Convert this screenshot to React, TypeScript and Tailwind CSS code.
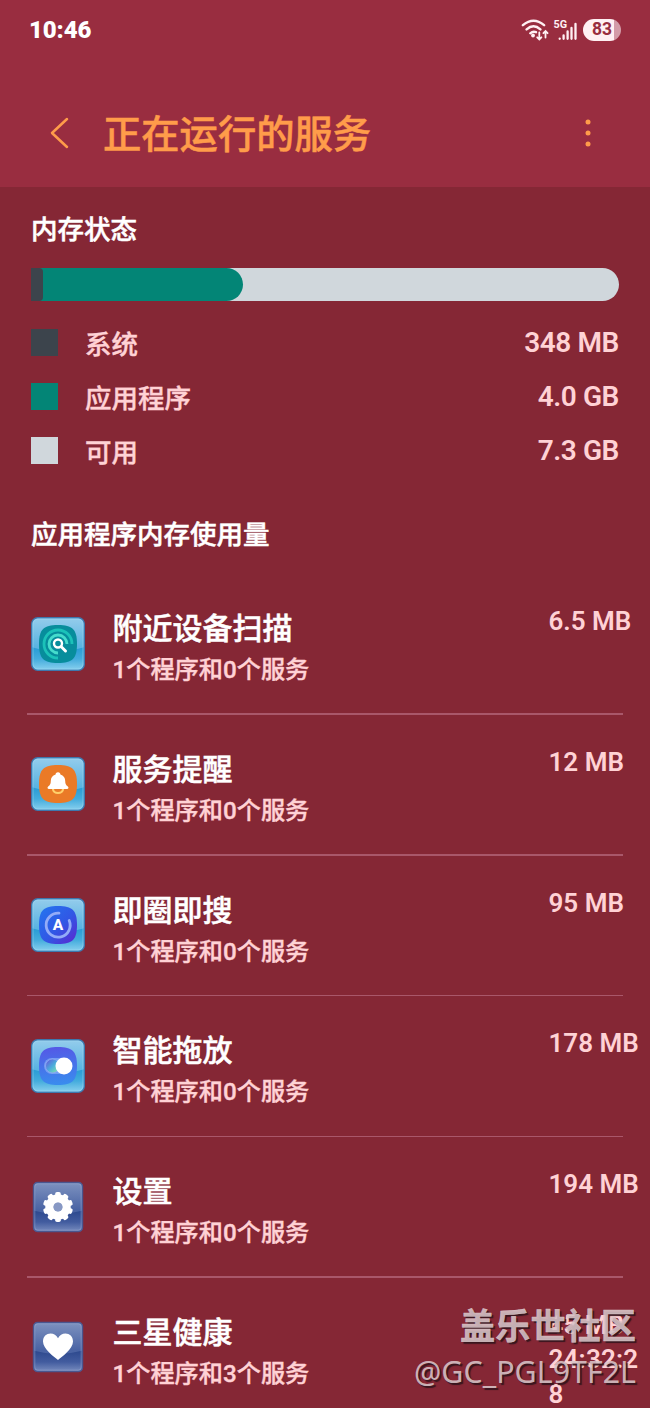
import type { ReactNode } from "react";
import clsx from "clsx";

const memory = [
  { label: "系统", value: "348 MB", color: "bg-[#3c444c]" },
  { label: "应用程序", value: "4.0 GB", color: "bg-[#038576]" },
  { label: "可用", value: "7.3 GB", color: "bg-[#d0d7dc]" },
];

const apps = [
  { name: "附近设备扫描", detail: "1个程序和0个服务", size: "6.5 MB", icon: <ScanIcon /> },
  { name: "服务提醒", detail: "1个程序和0个服务", size: "12 MB", icon: <BellIcon /> },
  { name: "即圈即搜", detail: "1个程序和0个服务", size: "95 MB", icon: <CircleSearchIcon /> },
  { name: "智能拖放", detail: "1个程序和0个服务", size: "178 MB", icon: <ToggleIcon /> },
  { name: "设置", detail: "1个程序和0个服务", size: "194 MB", icon: <GearIcon /> },
  { name: "三星健康", detail: "1个程序和3个服务", size: "45 MB", time: "24:32:28", icon: <HeartIcon /> },
];

// Glossy 54px tile shared by all of the app icons
function Tile({ id, dark, children }: { id: string; dark?: boolean; children: ReactNode }) {
  const inset = dark ? 2.5 : 0.7;
  const side = 54 - inset * 2;
  return (
    <svg viewBox="0 0 54 54" className="h-[54px] w-[54px]">
      <defs>
        <linearGradient id={`${id}-top`} x1="0" y1="0" x2="0" y2="1">
          <stop offset="0" stopColor={dark ? "#8296c2" : "#96cdec"} />
          <stop offset="0.55" stopColor={dark ? "#4a64a4" : "#5ab4e2"} />
          <stop offset="1" stopColor={dark ? "#46609f" : "#59b3e1"} />
        </linearGradient>
        <linearGradient id={`${id}-low`} x1="0" y1="0" x2="0" y2="1">
          <stop offset="0" stopColor={dark ? "#2b478c" : "#279bd5"} />
          <stop offset="0.5" stopColor={dark ? "#425c9f" : "#44acdd"} />
          <stop offset="1" stopColor={dark ? "#8598c6" : "#8ed3f0"} />
        </linearGradient>
        <clipPath id={`${id}-clip`}>
          <rect x={inset} y={inset} width={side} height={side} rx={dark ? 4 : 6} />
        </clipPath>
      </defs>
      <g clipPath={`url(#${id}-clip)`}>
        <rect width="54" height="54" fill={`url(#${id}-top)`} />
        <path d="M0 30Q27 38 54 30V54H0Z" fill={`url(#${id}-low)`} />
      </g>
      <rect
        x={inset}
        y={inset}
        width={side}
        height={side}
        rx={dark ? 4 : 6}
        fill="none"
        stroke={dark ? "#4a568f" : "#3d78ae"}
        strokeWidth="1.4"
      />
      <rect
        x={inset + 1.3}
        y={inset + 1.3}
        width={side - 2.6}
        height={side - 2.6}
        rx={dark ? 3 : 5}
        fill="none"
        stroke={dark ? "#9eb0d5" : "#a5def6"}
        strokeOpacity="0.5"
        strokeWidth="0.9"
      />
      {children}
    </svg>
  );
}

const squircle = "M27 8C41.5 8 46 12.5 46 27S41.5 46 27 46 8 41.5 8 27 12.500 8 27 8Z";

function ScanIcon() {
  return (
    <Tile id="scan">
      <path d={squircle} fill="#078d9c" />
      <g fill="none" strokeWidth="2.8">
        <path d="M27 41A14 14 0 1 1 41 27" stroke="#1bc2b9" />
        <path d="M27 36A9 9 0 1 1 36 27" stroke="#45dccc" />
      </g>
      <circle cx="27" cy="26.500" r="4" fill="#078d9c" stroke="#fff" strokeWidth="2.4" />
      <path d="M30.300 29.800L34.500 34" stroke="#fff" strokeWidth="3" strokeLinecap="round" />
    </Tile>
  );
}

function BellIcon() {
  return (
    <Tile id="bell">
      <path d={squircle} fill="#ea7a27" />
      <path d="M22 32a5 4 0 0 0 10 0" fill="none" stroke="#ffd06b" strokeWidth="2.200" />
      <path
        d="M27 15.200c1.600 0 2.500 1 2.400 2.300 3.200 1 4.800 3.500 4.800 6.500 0 3 .9 4.200 2.400 5.300 1.500 1.200 1 2.700-.6 2.700H18c-1.600 0-2.100-1.500-.6-2.700 1.500-1.100 2.400-2.300 2.400-5.300 0-3 1.600-5.500 4.800-6.500-.1-1.300.8-2.300 2.400-2.300Z"
        fill="#fff"
      />
    </Tile>
  );
}

function CircleSearchIcon() {
  return (
    <Tile id="circle">
      <defs>
        <linearGradient id="circle-bg" x1="0" y1="0" x2="1" y2="1">
          <stop offset="0" stopColor="#2376ef" />
          <stop offset="0.55" stopColor="#3157e5" />
          <stop offset="1" stopColor="#5d25cf" />
        </linearGradient>
      </defs>
      <path d={squircle} fill="url(#circle-bg)" />
      <path
        d="M28 15.200A12 12 0 1 0 38.200 22.500"
        fill="none"
        stroke="#93acf8"
        strokeWidth="2.800"
        strokeLinecap="round"
      />
      <text
        x="27"
        y="32.300"
        textAnchor="middle"
        fill="#fff"
        fontSize="15.500"
        fontWeight="800"
        fontFamily="Roboto, sans-serif"
      >
        A
      </text>
    </Tile>
  );
}

function ToggleIcon() {
  return (
    <Tile id="toggle">
      <defs>
        <linearGradient id="toggle-bg" x1="0.500" y1="0" x2="0.600" y2="1">
          <stop offset="0" stopColor="#5459e6" />
          <stop offset="1" stopColor="#398dee" />
        </linearGradient>
        <linearGradient id="toggle-ball" x1="0" y1="0" x2="1" y2="1">
          <stop offset="0" stopColor="#674cda" />
          <stop offset="0.500" stopColor="#4bacdc" />
          <stop offset="1" stopColor="#8bf0a4" />
        </linearGradient>
      </defs>
      <path d={squircle} fill="url(#toggle-bg)" />
      <rect x="13" y="19" width="28" height="16" rx="8" fill="#7ba6f3" fillOpacity="0.85" />
      <circle cx="21.500" cy="27" r="7" fill="url(#toggle-ball)" stroke="#92a5f5" strokeWidth="0.8" />
      <circle cx="33" cy="27" r="8.500" fill="#fff" />
    </Tile>
  );
}

function GearIcon() {
  const teeth = [0, 36, 72, 108, 144, 180, 216, 252, 288, 324];
  return (
    <Tile id="gear" dark>
      <circle cx="27" cy="27" r="8.500" fill="none" stroke="#fff" strokeWidth="8.500" />
      {teeth.map((angle) => (
        <rect
          key={angle}
          x="24.200"
          y="12"
          width="5.600"
          height="6"
          rx="1.800"
          fill="#fff"
          transform={`rotate(${angle} 27 27)`}
        />
      ))}
      <circle cx="27" cy="27" r="4.600" fill="#8798c4" />
    </Tile>
  );
}

function HeartIcon() {
  return (
    <Tile id="heart" dark>
      <path
        d="M27 40C23 36.700 12 29 12 21.500c0-5.200 3.500-8 7.500-8 3.300 0 6 1.900 7.500 4.700 1.500-2.800 4.200-4.700 7.500-4.700 4 0 7.500 2.800 7.500 8C42 29 31 36.700 27 40Z"
        fill="#fff"
      />
    </Tile>
  );
}

function StatusBar() {
  return (
    <div className="flex h-[60px] items-center justify-between pr-[29px] pl-[29px] text-white">
      <span className="font-['Roboto',sans-serif] text-[24px] leading-[60px] font-black tracking-[-0.1px]">
        10:46
      </span>
      <div className="flex items-center">
        <svg viewBox="0 0 58 26" className="h-[26px] w-[58px]" fill="none" stroke="#fff0f3" strokeLinecap="round">
          <path
            d="M1.900 8.200Q12.500-.8 23.100 8.200M5.600 12.400Q12.500 6.200 19.400 12.400M9.300 16.300Q12 13.800 15 15.200"
            strokeWidth="2.400"
          />
          <circle cx="12" cy="18.500" r="1.900" fill="#fff0f3" stroke="none" />
          <path
            d="M18.300 15.500v6.500M16.200 20.300l2.100 2.100 2.100-2.100M24.500 20.500v-6.500M22.400 16.200l2.100-2.100 2.100 2.100"
            strokeWidth="1.800"
          />
          <text x="32.500" y="11.300" fill="#fff0f3" stroke="none" fontSize="10.800" fontWeight="700" fontFamily="Roboto, sans-serif">
            5G
          </text>
          <path d="M38.700 21.600v.2M42.600 18.500v3.300M46.600 14.500v7.300M50.500 11v10.800M54.500 7v14.800" strokeWidth="2.300" />
        </svg>
        <div className="ml-1 flex h-[22px] w-[38px] items-center justify-center rounded-full bg-linear-to-r from-[#fff0f3] from-82% to-[#d39ba8] to-82% font-['Roboto',sans-serif] text-[17.5px] leading-none font-bold text-[#992d40]">
          83
        </div>
      </div>
    </div>
  );
}

function Header() {
  return (
    <header className="h-[187px] bg-[#992d40]">
      <StatusBar />
      <div className="flex h-[146px] items-center pr-[56px] pl-[49px] text-[#ff9c4a]">
        <svg viewBox="0 0 20 34" className="h-[34px] w-5" fill="none">
          <path d="M18 3L3 17L18 31" stroke="currentColor" strokeWidth="2.500" strokeLinecap="round" strokeLinejoin="round" />
        </svg>
        <h1 className="ml-[34px] flex-1 pt-1 text-[38.3px] leading-[54px] font-medium whitespace-nowrap [-webkit-text-stroke:0.5px]">
          正在运行的服务
        </h1>
        <svg viewBox="0 0 12 30" className="h-[30px] w-3" fill="currentColor">
          <circle cx="6" cy="4" r="2.500" />
          <circle cx="6" cy="15" r="2.500" />
          <circle cx="6" cy="26" r="2.500" />
        </svg>
      </div>
    </header>
  );
}

function MemoryStatus() {
  return (
    <section className="px-[31px] pt-[23px]">
      <h2 className="text-[26.5px] leading-10 font-medium text-white [-webkit-text-stroke:0.5px]">内存状态</h2>
      <div className="mt-[18px] h-[33px] overflow-hidden rounded-l-md rounded-r-full bg-[#d0d7dc]">
        <div className="h-full w-[212px] rounded-r-full bg-[#038576]">
          <div className="h-full w-3 rounded-r-[4px] bg-[#3c444c]" />
        </div>
      </div>
      <ul className="mt-[14px]">
        {memory.map(({ label, value, color }) => (
          <li key={label} className="flex h-[54px] items-center text-[#ffd2d5]">
            <span className={clsx("h-[27px] w-[27px]", color)} />
            <span className="ml-[27px] flex-1 pt-1.5 text-[26.5px] leading-10 font-medium [-webkit-text-stroke:0.4px]">
              {label}
            </span>
            <span className="pt-0.5 font-['Roboto',sans-serif] text-[28px] leading-8 font-semibold tracking-[-0.4px]">
              {value}
            </span>
          </li>
        ))}
      </ul>
    </section>
  );
}

function AppList() {
  return (
    <section className="mt-[38px]">
      <h2 className="pl-[31px] text-[26.5px] leading-10 font-medium text-white [-webkit-text-stroke:0.5px]">
        应用程序内存使用量
      </h2>
      <ul className="mt-[19px]">
        {apps.map(({ name, detail, size, time, icon }) => (
          <li key={name} className="relative flex h-[140.8px] pl-[30.5px]">
            <div className="mt-[42.5px]">{icon}</div>
            <div className="ml-7 w-[436px] pt-[33px]">
              <h3 className="text-[30px] leading-[44px] font-medium text-white [-webkit-text-stroke:0.5px]">{name}</h3>
              <p className="text-[24.2px] leading-[38px] font-medium text-[#ffd2d5] [-webkit-text-stroke:0.4px]">
                {detail}
              </p>
            </div>
            <div className="w-[94px] pt-[30px] font-['Roboto',sans-serif] text-[26px] leading-[34.500px] font-semibold break-all text-[#ffd2d5]">
              <p className="whitespace-nowrap">{size}</p>
              {time && <p className="tracking-[0.2px]">{time}</p>}
            </div>
            <div className="absolute right-[27px] bottom-0 left-[27px] h-[1.5px] bg-[#a9576a]" />
          </li>
        ))}
      </ul>
    </section>
  );
}

function Watermark() {
  return (
    <div className="absolute right-[14px] bottom-[15px] text-right whitespace-nowrap text-[#d9c5c9]/90 [text-shadow:2px_2px_1px_#38161e]">
      <p className="text-[35.2px] leading-[48px] font-bold [-webkit-text-stroke:0.5px]">盖乐世社区</p>
      <p className="font-['Noto_Sans','Open_Sans',sans-serif] text-[30.4px] leading-[42px]">@GC_PGL9TF2L</p>
    </div>
  );
}

export default function App() {
  return (
    <main className="relative h-[1408px] w-[650px] overflow-hidden bg-[#852735] font-['Roboto','Noto_Sans_CJK_SC',sans-serif]">
      <Header />
      <MemoryStatus />
      <AppList />
      <Watermark />
    </main>
  );
}
